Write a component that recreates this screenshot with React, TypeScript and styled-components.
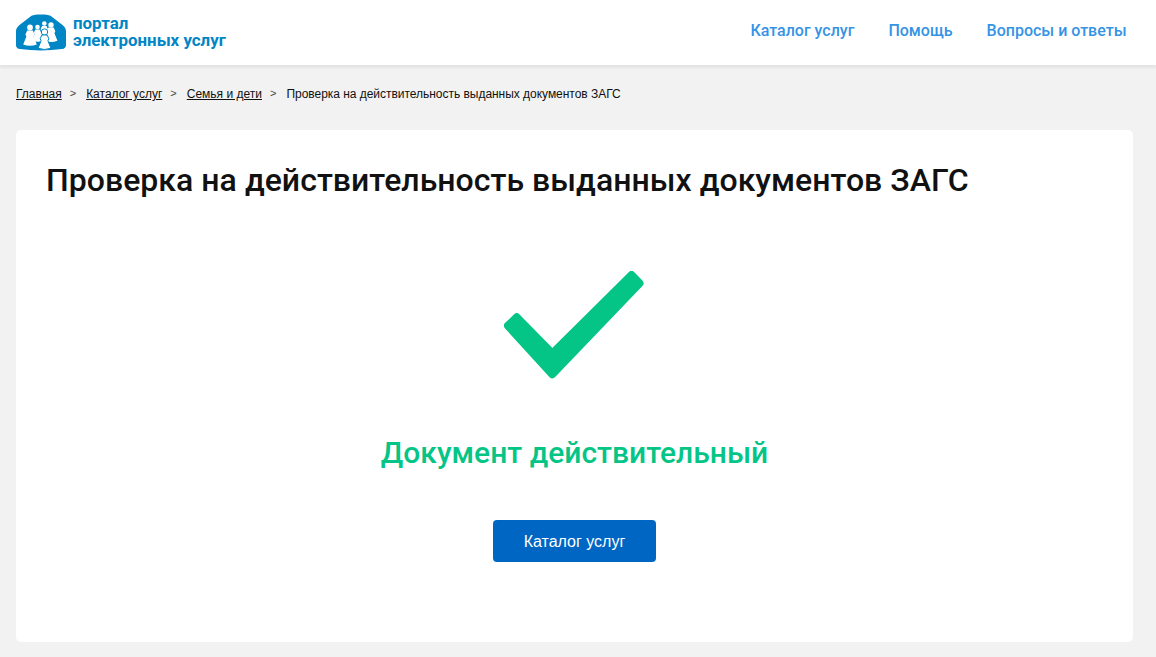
import React from "react";
import styled, { createGlobalStyle } from "styled-components";

const Global = createGlobalStyle`
  html, body { margin: 0; padding: 0; background: #f2f2f2; height: 100%; overflow: hidden; }
  body { font-family: Roboto, "Noto Sans", sans-serif; }
  * { box-sizing: border-box; }
`;

const Page = styled.div`
  width: 1156px;
  height: 657px;
  background: #f2f2f2;
  display: flex;
  flex-direction: column;
`;

const Header = styled.header`
  height: 65px;
  flex: none;
  background: #fff;
  box-shadow: 0 3px 2px #e4e4e4;
  display: flex;
  align-items: center;
  justify-content: space-between;
  padding: 0 29.5px 4px 16px;
`;

const Brand = styled.a`
  display: flex;
  align-items: center;
  gap: 7px;
  color: #0085c5;
  font-weight: 700;
  font-size: 16.9px;
  line-height: 17px;
`;

const LogoSvg = styled.svg`
  display: block;
  margin-top: 4px;
`;

const BrandName = styled.span`
  display: block;
  margin-top: 2px;
`;

const Nav = styled.nav`
  display: flex;
  gap: 34px;
`;

const NavLink = styled.a`
  color: #3593e5;
  font-size: 16px;
  font-weight: 500;
  line-height: 20px;
`;

const Crumbs = styled.div`
  display: flex;
  align-items: flex-start;
  padding: 22px 16px 0;
  height: 65px;
  flex: none;
  font-family: "Liberation Sans", Arial, sans-serif;
  font-size: 12px;
  color: #111;
`;

const CrumbLink = styled.a`
  color: #111;
  text-decoration: underline;
`;

const CurrentCrumb = styled.span`
  letter-spacing: -0.03px;
`;

const Sep = styled.span`
  margin: 0 10px 0 8px;
  color: #444;
  font-size: 11px;
`;

const Card = styled.main`
  width: 1117px;
  height: 512px;
  margin-left: 16px;
  background: #fff;
  border-radius: 5px;
  padding: 31px 30px 0;
  display: flex;
  flex-direction: column;
`;

const Title = styled.h1`
  margin: 0;
  font-size: 32px;
  line-height: 38px;
  font-weight: 500;
  letter-spacing: 0.03px;
  color: #111;
`;

const Result = styled.div`
  display: flex;
  flex-direction: column;
  align-items: center;
  margin-top: 72px;
`;

const CheckSvg = styled.svg`
  display: block;
  margin-right: 1px;
`;

const ResultText = styled.div`
  margin-top: 55px;
  font-size: 30px;
  line-height: 38px;
  font-weight: 500;
  color: #04c586;
`;

const Button = styled.a`
  margin-top: 48px;
  width: 163px;
  height: 42px;
  padding-top: 1px;
  background: #0066c3;
  border-radius: 4px;
  color: #fff;
  font-family: "Liberation Sans", Arial, sans-serif;
  font-size: 16px;
  display: flex;
  align-items: center;
  justify-content: center;
`;

const personBody = (x: number, y: number, s: number) =>
  `M${x - 2.8 * s} ${y} L${x + 2.8 * s} ${y} L${x + 4.6 * s} ${y + 4 * s} L${x + 3.6 * s} ${y + 6 * s} L${x + 6.8 * s} ${y + 14 * s} Q${x} ${y + 16.5 * s} ${x - 6.8 * s} ${y + 14 * s} L${x - 3.6 * s} ${y + 6 * s} L${x - 4.6 * s} ${y + 4 * s} Z`;

const Logo = () => (
  <LogoSvg width="50" height="37" viewBox="0 0 50 37" aria-hidden="true">
    <path
      d="M15.500 1.800 C19 0 31 0 34.500 1.800 L46.500 11 C48.800 12.800 50 14.800 50 17.500 L50 31 C50 33.500 48.500 34.800 46 35.100 C32 36.800 18 36.800 4 35.100 C1.500 34.800 0 33.500 0 31 L0 17.500 C0 14.800 1.200 12.800 3.500 11 Z"
      fill="#0085c5"
    />
    <g fill="#fff">
      <circle cx="14" cy="13.500" r="2.900" />
      <path d={personBody(14, 16.500, 1)} />
      <circle cx="21.500" cy="13" r="2.300" />
      <path d={personBody(21.500, 15.500, 0.8)} />
      <circle cx="28.300" cy="9.500" r="2.300" />
      <path d={personBody(28.300, 12, 0.8)} />
      <circle cx="35" cy="11" r="2.700" />
      <path d={personBody(35, 13.500, 0.95)} />
    </g>
    <g fill="#fff" stroke="#0085c5" strokeWidth="1">
      <circle cx="28.500" cy="18" r="3.200" />
      <path d={personBody(28.500, 21, 0.95)} />
    </g>
  </LogoSvg>
);

const Check = () => (
  <CheckSvg width="140" height="108" viewBox="0 0 140 108" aria-hidden="true">
    <path
      d="M127.500 4 L135.500 12.300 L48.300 103.300 L4 54.700 L12.700 46.300 L48.300 82.500 Z"
      fill="#04c586"
      stroke="#04c586"
      strokeWidth="8"
      strokeLinejoin="round"
    />
  </CheckSvg>
);

export default function App() {
  return (
    <Page>
      <Global />
      <Header>
        <Brand>
          <Logo />
          <BrandName>
            портал
            <br />
            электронных услуг
          </BrandName>
        </Brand>
        <Nav>
          <NavLink>Каталог услуг</NavLink>
          <NavLink>Помощь</NavLink>
          <NavLink>Вопросы и ответы</NavLink>
        </Nav>
      </Header>
      <Crumbs>
        <CrumbLink>Главная</CrumbLink>
        <Sep>&gt;</Sep>
        <CrumbLink>Каталог услуг</CrumbLink>
        <Sep>&gt;</Sep>
        <CrumbLink>Семья и дети</CrumbLink>
        <Sep>&gt;</Sep>
        <CurrentCrumb>Проверка на действительность выданных документов ЗАГС</CurrentCrumb>
      </Crumbs>
      <Card>
        <Title>Проверка на действительность выданных документов ЗАГС</Title>
        <Result>
          <Check />
          <ResultText>Документ действительный</ResultText>
          <Button>Каталог услуг</Button>
        </Result>
      </Card>
    </Page>
  );
}
